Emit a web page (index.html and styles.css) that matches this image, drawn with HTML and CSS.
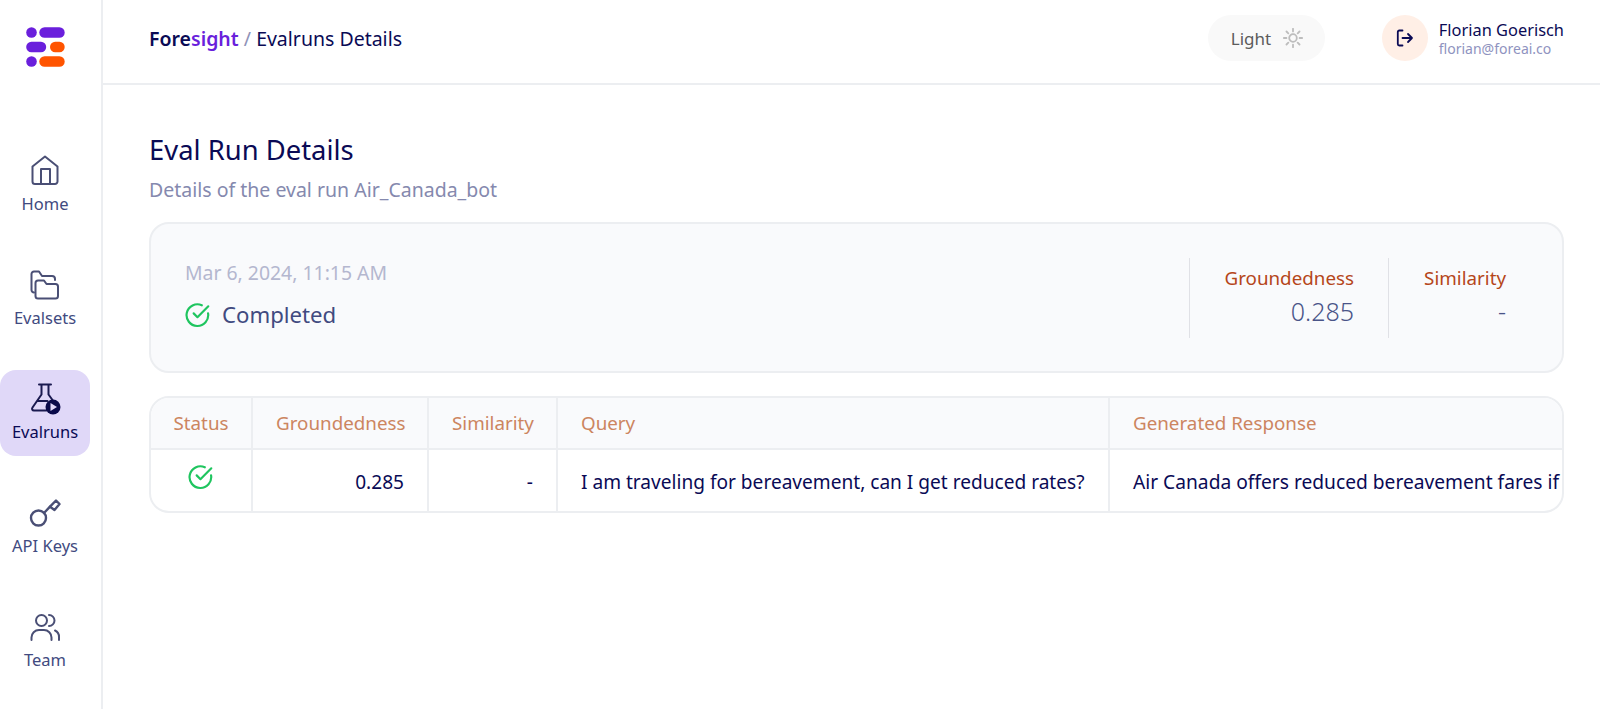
FILE: index.html
```html
<!DOCTYPE html>
<html lang="en">
<head>
<meta charset="utf-8">
<title>Foresight - Evalruns Details</title>
<link rel="stylesheet" href="styles.css">
</head>
<body>
<div class="app">
  <aside class="sidebar">
    <div class="logo">
      <svg width="40" height="40" viewBox="0 0 40 40">
        <circle cx="5.5" cy="5.5" r="5.3" fill="#6a1fdc"/>
        <rect x="13.3" y="0.2" width="25.4" height="10.6" rx="5.3" fill="#6a1fdc"/>
        <rect x="0.2" y="14.8" width="20" height="10.4" rx="5.2" fill="#6a1fdc"/>
        <rect x="24" y="14.8" width="14.7" height="10.4" rx="5.2" fill="#ff5400"/>
        <circle cx="5.5" cy="34.5" r="5.3" fill="#6a1fdc"/>
        <rect x="13.3" y="29.2" width="25.4" height="10.6" rx="5.3" fill="#ff5400"/>
      </svg>
    </div>
    <nav class="nav">
      <a class="nav-item">
        <svg class="nav-icon" viewBox="0 0 32 32"><path d="M3.500 11.500 16 1.500l12.500 10V26.500a2.500 2.500 0 0 1-2.500 2.500H6a2.500 2.500 0 0 1-2.500-2.500z"/><path d="M12 29V14h9v15"/></svg>
        <span>Home</span>
      </a>
      <a class="nav-item">
        <svg class="nav-icon" viewBox="0 0 32 32"><path d="M5 23.500A2.500 2.500 0 0 1 2.500 21V5A2.500 2.500 0 0 1 5 2.500h5l3 4.500h10a3 3 0 0 1 3 3v1"/><path d="M6.500 14a2.500 2.500 0 0 1 2.500-2.500h6l2.500 3.500h9a2.500 2.500 0 0 1 2.500 2.500V27a2.500 2.500 0 0 1-2.500 2.500H9A2.500 2.500 0 0 1 6.500 27z"/></svg>
        <span>Evalsets</span>
      </a>
      <a class="nav-item active">
        <svg class="nav-icon" viewBox="0 0 32 32"><path d="M10 1.500h12M12.500 1.500v10L3.500 24.500c-1 1.500-.3 3 1.500 3h12.500M19.500 1.500v10l4 5.500M8.500 18h10"/><circle cx="24" cy="24" r="7.500" fill="#0a0a4a" stroke="none"/><path d="M21.500 20v8l6.500-4z" fill="#e0d8f8" stroke="none"/></svg>
        <span>Evalruns</span>
      </a>
      <a class="nav-item">
        <svg class="nav-icon key" viewBox="0 0 32 32"><circle cx="9.500" cy="21" r="7.500"/><path d="M15 16 21 9.700"/><path d="M21 9.700 27 3.500l3.500 3.500-5 6z"/></svg>
        <span>API Keys</span>
      </a>
      <a class="nav-item">
        <svg class="nav-icon" viewBox="0 0 32 32"><circle cx="12.500" cy="9.500" r="5.500"/><path d="M2.500 29v-2.500A7.500 7.500 0 0 1 10 19h5a7.500 7.500 0 0 1 7.500 7.500V29"/><path d="M20 4a5.500 5.500 0 0 1 0 11M26 19.500a7 7 0 0 1 4 6.500v3"/></svg>
        <span>Team</span>
      </a>
    </nav>
  </aside>
  <div class="main">
    <header class="topbar">
      <div class="crumb"><b class="fore">Fore</b><b class="sight">sight</b><span class="slash"> / </span><span>Evalruns Details</span></div>
      <div class="top-right">
        <div class="theme">
          <span>Light</span>
          <svg width="20" height="20" viewBox="0 0 20 20" class="sun"><circle cx="10" cy="10" r="3.800"/><path d="M10 .8v2.600M10 16.600v2.600M.8 10h2.600M16.600 10h2.600M3.500 3.500l1.800 1.800M14.700 14.700l1.800 1.800M3.500 16.500l1.800-1.800M14.700 5.300l1.800-1.800"/></svg>
        </div>
        <div class="user">
          <div class="avatar">
            <svg width="20" height="20" viewBox="0 0 20 20"><path d="M7.500 2.500H4.300a1.500 1.500 0 0 0-1.500 1.500v12a1.500 1.500 0 0 0 1.500 1.500h3.200M7.500 10h9.500M13 6l4 4-4 4"/></svg>
          </div>
          <div class="user-text">
            <div class="user-name">Florian Goerisch</div>
            <div class="user-mail">florian@foreai.co</div>
          </div>
        </div>
      </div>
    </header>
    <main class="content">
      <h1 class="title">Eval Run Details</h1>
      <p class="subtitle">Details of the eval run Air_Canada_bot</p>
      <section class="card">
        <div class="card-left">
          <div class="date">Mar 6, 2024, 11:15 AM</div>
          <div class="status">
            <svg class="check" width="26" height="26" viewBox="0 0 24 24"><path d="M21.300 10.500A10 10 0 1 1 15.500 3"/><path d="m8 10.500 3.500 3.500L21.500 4"/></svg>
            <span>Completed</span>
          </div>
        </div>
        <div class="metric metric-ground">
          <div class="metric-label">Groundedness</div>
          <div class="metric-value">0.285</div>
        </div>
        <div class="metric metric-sim">
          <div class="metric-label">Similarity</div>
          <div class="metric-value">-</div>
        </div>
      </section>
      <section class="table">
        <div class="row head">
          <div class="cell c-status center">Status</div>
          <div class="cell c-ground">Groundedness</div>
          <div class="cell c-sim">Similarity</div>
          <div class="cell c-query">Query</div>
          <div class="cell c-resp">Generated Response</div>
        </div>
        <div class="row body">
          <div class="cell c-status center top"><svg class="check" width="26" height="26" viewBox="0 0 24 24"><path d="M21.300 10.500A10 10 0 1 1 15.500 3"/><path d="m8 10.500 3.500 3.500L21.500 4"/></svg></div>
          <div class="cell c-ground right">0.285</div>
          <div class="cell c-sim right">-</div>
          <div class="cell c-query">I am traveling for bereavement, can I get reduced rates?</div>
          <div class="cell c-resp">Air Canada offers reduced bereavement fares if</div>
        </div>
      </section>
    </main>
  </div>
</div>
</body>
</html>
```
FILE: styles.css
```css
* { box-sizing: border-box; }
html, body { margin: 0; height: 100%; }
body {
  font-family: "Noto Sans", "Open Sans", sans-serif;
  color: #0a0a55;
  background: #fff;
  overflow: hidden;
}
.app { display: flex; height: 709px; }
.sidebar {
  width: 103px;
  flex: none;
  border-right: 2px solid #eceef1;
}
.logo { padding: 27px 0 0 26px; height: 142px; }
.logo svg { display: block; }
.nav { display: flex; flex-direction: column; gap: 28px; width: 90px; }
.nav-item {
  height: 86px;
  display: flex;
  flex-direction: column;
  align-items: center;
  padding-top: 13px;
  gap: 6px;
  font-size: 16.500px;
  line-height: 22px;
  color: #414a80;
}
.nav-item.active { background: #e0d8f8; color: #0a0a55; border-radius: 16px; }
.nav-icon {
  width: 32px;
  height: 32px;
  flex: none;
  fill: none;
  stroke: #4a4f75;
  stroke-width: 2;
  stroke-linecap: round;
  stroke-linejoin: round;
}
.active .nav-icon { stroke: #1a1a50; }
.key { stroke-width: 2.400; }
.main { flex: 1; min-width: 0; }
.topbar {
  height: 85px;
  border-bottom: 2px solid #eceef1;
  display: flex;
  align-items: center;
  justify-content: space-between;
  padding: 0 36px 7px 46px;
}
.crumb { font-size: 19.500px; color: #0a0a55; }
.crumb b { font-weight: 600; }
.sight { color: #6a1fdc; }
.slash { color: #8f93b8; }
.top-right { display: flex; align-items: center; }
.theme {
  width: 117px;
  height: 46px;
  border-radius: 23px;
  background: #f9f9f9;
  color: #5c5c5c;
  font-size: 17px;
  display: flex;
  align-items: center;
  padding-left: 23px;
  gap: 12px;
  margin-right: 57px;
}
.sun { fill: none; stroke: #bdbdbd; stroke-width: 1.800; stroke-linecap: round; }
.user { display: flex; align-items: center; gap: 11px; }
.avatar {
  width: 46px;
  height: 46px;
  border-radius: 50%;
  background: #ffefe6;
  display: flex;
  align-items: center;
  justify-content: center;
}
.avatar svg { fill: none; stroke: #0a0a55; stroke-width: 1.800; stroke-linecap: round; stroke-linejoin: round; }
.user-name { font-size: 16.400px; line-height: 21px; color: #0a0a55; }
.user-mail { font-size: 14px; line-height: 18px; color: #8f93c0; }
.content { padding: 46px 36px 0 46px; }
.title { margin: 0; font-size: 27.400px; line-height: 38px; font-weight: 400; color: #0a0a55; }
.subtitle { margin: 8px 0 0; font-size: 19.500px; line-height: 26px; color: #8589ae; }
.card {
  margin-top: 19px;
  height: 151px;
  border: 2px solid #eceef1;
  border-radius: 20px;
  background: #f9fafc;
  display: flex;
  align-items: center;
  padding: 0 56px 0 34px;
}
.card-left { flex: 1; padding-bottom: 5px; }
.date { font-size: 19.400px; line-height: 26px; color: #b4b7cf; }
.status { display: flex; align-items: center; gap: 11px; margin-top: 14px; font-size: 22.200px; line-height: 30px; color: #414a80; }
.check { fill: none; stroke: #1fc55f; stroke-width: 2; stroke-linecap: round; stroke-linejoin: round; display: block; }
.metric {
  height: 80px;
  border-left: 1px solid #e0e1e6;
  text-align: right;
  display: flex;
  flex-direction: column;
  justify-content: center;
  padding-bottom: 2px;
}
.metric-ground { width: 199px; padding-right: 34px; }
.metric-sim { width: 118px; }
.metric-label { font-size: 18.800px; line-height: 26px; color: #b5461a; }
.metric-value { font-size: 25px; font-weight: 300; line-height: 34px; margin-top: 3px; color: #4a5488; }
.table {
  margin-top: 23px;
  height: 117px;
  border: 2px solid #eceef1;
  border-radius: 20px;
  overflow: hidden;
}
.row { display: flex; }
.head { height: 52px; background: #f9fafc; border-bottom: 2px solid #eceef1; color: #cc8560; }
.head .cell { font-size: 18.800px; }
.body { height: 63px; color: #0a0a55; }
.cell {
  font-size: 19.100px;
  padding: 0 23px;
  display: flex;
  align-items: center;
  border-right: 2px solid #eceef1;
  white-space: nowrap;
  overflow: hidden;
}
.c-status { width: 102px; }
.c-ground { width: 176px; flex: none; }
.c-sim { width: 129px; }
.c-query { width: 552px; }
.c-resp { flex: 1; border-right: 0; padding-right: 0; }
.body .c-resp { font-size: 19.200px; }
.center { justify-content: center; padding: 0; }
.right { justify-content: flex-end; }
.top { align-items: flex-start; padding-top: 14px; }
```
